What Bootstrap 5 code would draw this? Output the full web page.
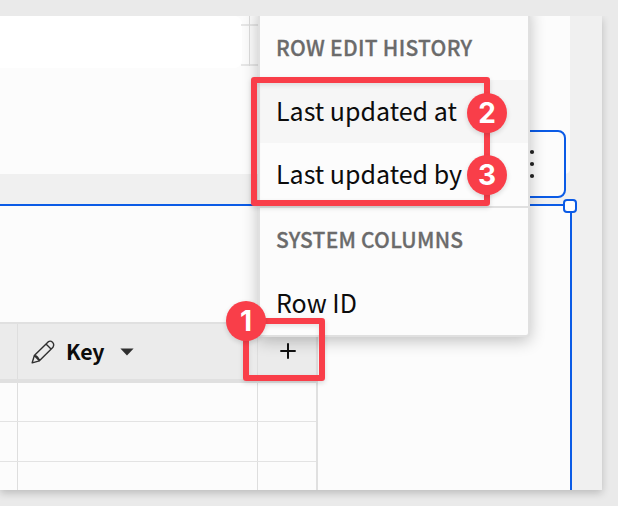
<!DOCTYPE html>
<html lang="en">
<head>
<meta charset="utf-8">
<meta name="viewport" content="width=device-width, initial-scale=1">
<title>Row edit history</title>
<link href="https://cdn.jsdelivr.net/npm/bootstrap@5.3.0/dist/css/bootstrap.min.css" rel="stylesheet">
<style>
body{background:#eaeaea;font-family:"Noto Sans CJK SC",sans-serif;color:#0c0c0c;width:618px;height:506px}
.frame{width:602px;height:474px;margin-top:16px;background:#f0f0f0}
.frame-shadow{box-shadow:0 3px 8px rgba(0,0,0,.2);clip-path:inset(0 -16px -16px 0)}
.upper{width:570px;height:158px;background:#fcfcfc;border-bottom-right-radius:5px}
.field{width:242px;height:52px;background:#fff;border-radius:0 8px 8px 0}
.stub{width:17px;height:50px;margin-left:-1px;border-bottom:2px solid #e6e6e6}
.stub-line{height:10px;border-bottom:2px solid #e6e6e6}
.stub-col{width:1px;height:50px;background:#dcdcdc;margin-left:-9px}
.lower{width:572px;height:286px;margin-top:30px;background:#fcfcfc;border-top:2px solid #0b5be6;border-right:2px solid #0b5be6}
.grid{width:318px;margin-top:116px;border-top:2px solid #e0e0e0;border-right:2px solid #e0e0e0}
.grid-head{height:59px;background:#ebebeb;border-bottom:4px solid #e0e0e0}
.grid-row{height:40px;border-bottom:1px solid #e3e3e3}
.grid-row.first{height:39px}
.grid-row.last{height:28px;border-bottom:0}
.c0{width:18px;border-right:1px solid #dedede}
.c1{width:240px;border-right:1px solid #dedede}
.c2{width:58px;padding:0 0 1px 1px}
.c1 svg{display:block}
.pencil{margin-left:13px}
.key{font-size:21.3px;font-weight:700;line-height:30px;margin-left:11px;width:39px;padding-bottom:2px;letter-spacing:-.1px}
.caret{margin-left:15px}
.action{left:500px;top:114px;width:66px;height:68px;border:2px solid #0b5be6;border-radius:8px;background:#fcfcfc}
.dots{left:27px;top:17px}
.handle{left:563px;top:183px;width:14px;height:14px;border:2px solid #0b5be6;border-radius:4px;background:#fff}
.picker-clip{left:230px;top:0;width:340px;height:360px;overflow:hidden}
.picker{left:28px;top:-10px;width:272px;height:331px;padding-top:10px;background:#fcfcfc;border:2px solid #e0e0e0;border-radius:4px;box-shadow:0 4px 16px rgba(0,0,0,.24);background-clip:padding-box}
.picker .list-group-item{padding:0 0 2px 16px;border:0;background:none;color:#0c0c0c;height:63px;white-space:nowrap}
.picker .entry{font-size:25px}
.picker .entry.hovered{background:#f6f6f6}
.picker .title{font-size:21px;font-weight:500;color:#6b6b6b;height:62px;letter-spacing:.28px;-webkit-text-stroke:.3px #6b6b6b}
.picker .title.second{border-top:2px solid #e0e0e0;height:66px;padding-bottom:0;letter-spacing:.22px}
.outline{border:6px solid #f93e49;border-radius:3px;box-shadow:0 2px 5px rgba(0,0,0,.14),inset 0 2px 5px rgba(0,0,0,.1)}
.outline.items{left:250.5px;top:61.3px;width:239.5px;height:129px}
.outline.add{left:243px;top:301.5px;width:82px;height:63px}
.num{width:40px;height:40px;border-radius:50%;background:#f93e49;color:#fff;font:700 28px/40px Inter,sans-serif;text-align:center;box-shadow:0 2px 5px rgba(0,0,0,.14)}
.num.one{left:226px;top:285px}
.num.two{left:467px;top:76.5px}
.num.three{left:467px;top:139px}
</style>
<script src="https://cdn.jsdelivr.net/npm/bootstrap@5.3.0/dist/js/bootstrap.bundle.min.js"></script>
</head>
<body class="overflow-hidden d-flex align-items-start">
<main class="frame frame-shadow position-relative">
  <section class="upper d-flex align-items-start">
    <div class="field"></div>
    <div class="stub"><div class="stub-line"></div></div>
    <div class="stub-col"></div>
  </section>
  <div class="action position-absolute">
    <svg class="dots position-absolute" width="6" height="32" viewBox="0 0 6 32" fill="#242424"><circle cx="3" cy="3" r="2.1"/><circle cx="3" cy="15" r="2.1"/><circle cx="3" cy="27" r="2.1"/></svg>
  </div>
  <section class="lower overflow-hidden">
    <div class="grid">
      <div class="grid-head d-flex">
        <div class="c0"></div>
        <div class="c1 d-flex align-items-center">
          <svg class="pencil" width="24" height="24" viewBox="0 0 24 24" fill="none" stroke="#303030" stroke-width="1.4" stroke-linejoin="round" stroke-linecap="round"><path d="M1.2 22.8 3.3 15.6 17.1 1.9Q19.4.2 21.5 2.2T22 7.2L8.4 20.8ZM15 4l5 5M3.3 15.6Q7 15.5 8.4 20.8M3.3 15.6l5.1 5.2"/></svg>
          <span class="key">Key</span>
          <svg class="caret" width="14" height="8" viewBox="0 0 14 8"><path d="M.4.5h13.2L7 7.5Z" fill="#303030"/></svg>
        </div>
        <div class="c2 d-flex justify-content-center align-items-center"><svg width="18" height="18" viewBox="0 0 18 18" stroke="#111" stroke-width="2"><path d="M1.3 9h15.4M9 1.3v15.4"/></svg></div>
      </div>
      <div class="grid-row first d-flex"><div class="c0"></div><div class="c1"></div></div>
      <div class="grid-row d-flex"><div class="c0"></div><div class="c1"></div></div>
      <div class="grid-row last d-flex"><div class="c0"></div><div class="c1"></div></div>
    </div>
  </section>
  <div class="handle position-absolute"></div>
  <div class="picker-clip position-absolute">
    <div class="picker list-group position-absolute">
      <div class="list-group-item title d-flex align-items-center">ROW EDIT HISTORY</div>
      <div class="list-group-item entry hovered d-flex align-items-center">Last updated at</div>
      <div class="list-group-item entry d-flex align-items-center">Last updated by</div>
      <div class="list-group-item title second d-flex align-items-center">SYSTEM COLUMNS</div>
      <div class="list-group-item entry d-flex align-items-center">Row ID</div>
    </div>
  </div>
  <div class="outline items position-absolute"></div>
  <div class="outline add position-absolute"></div>
  <div class="num one position-absolute">1</div>
  <div class="num two position-absolute">2</div>
  <div class="num three position-absolute">3</div>
</main>
</body>
</html>
